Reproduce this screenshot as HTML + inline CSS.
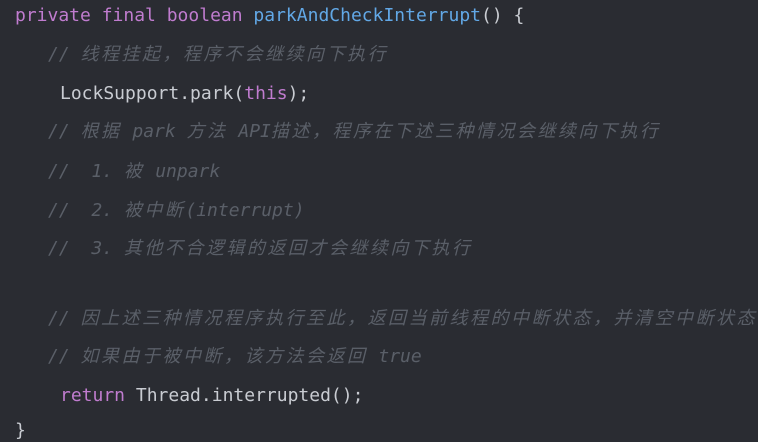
<!DOCTYPE html>
<html><head><meta charset="utf-8"><style>
html,body{margin:0;padding:0;background:#2a2c32;width:758px;height:442px;overflow:hidden}
.l{position:absolute;left:0;white-space:pre;font-family:"DejaVu Sans Mono","Noto Sans CJK SC",monospace;font-size:18px;line-height:20px;color:#c9ccd2}
.k{color:#c07ccf}
.f{color:#62a8e6}
.c{color:#5a5f68;font-style:italic}
.c span{letter-spacing:2.5px}
</style></head><body>
<div class="l" style="top:6px;left:15px"><span class="k">private final boolean</span> <span class="f">parkAndCheckInterrupt</span>() {</div>
<div class="l c" style="top:45px;left:48px">// <span>线程挂起，程序不会继续向下执行</span></div>
<div class="l" style="top:84px;left:60px">LockSupport.park(<span class="k">this</span>);</div>
<div class="l c" style="top:122px;left:48px">// <span>根据</span> park <span>方法</span> API<span>描述，程序在下述三种情况会继续向下执行</span></div>
<div class="l c" style="top:162px;left:48px">//  1. <span>被</span> unpark</div>
<div class="l c" style="top:201px;left:48px">//  2. <span>被中断</span>(interrupt)</div>
<div class="l c" style="top:239px;left:48px">//  3. <span>其他不合逻辑的返回才会继续向下执行</span></div>
<div class="l c" style="top:309px;left:48px">// <span>因上述三种情况程序执行至此，返回当前线程的中断状态，并清空中断状态</span></div>
<div class="l c" style="top:347px;left:48px">// <span>如果由于被中断，该方法会返回</span> true</div>
<div class="l" style="top:386px;left:60px"><span class="k">return</span> Thread.interrupted();</div>
<div class="l" style="top:421px;left:15px">}</div>
</body></html>
